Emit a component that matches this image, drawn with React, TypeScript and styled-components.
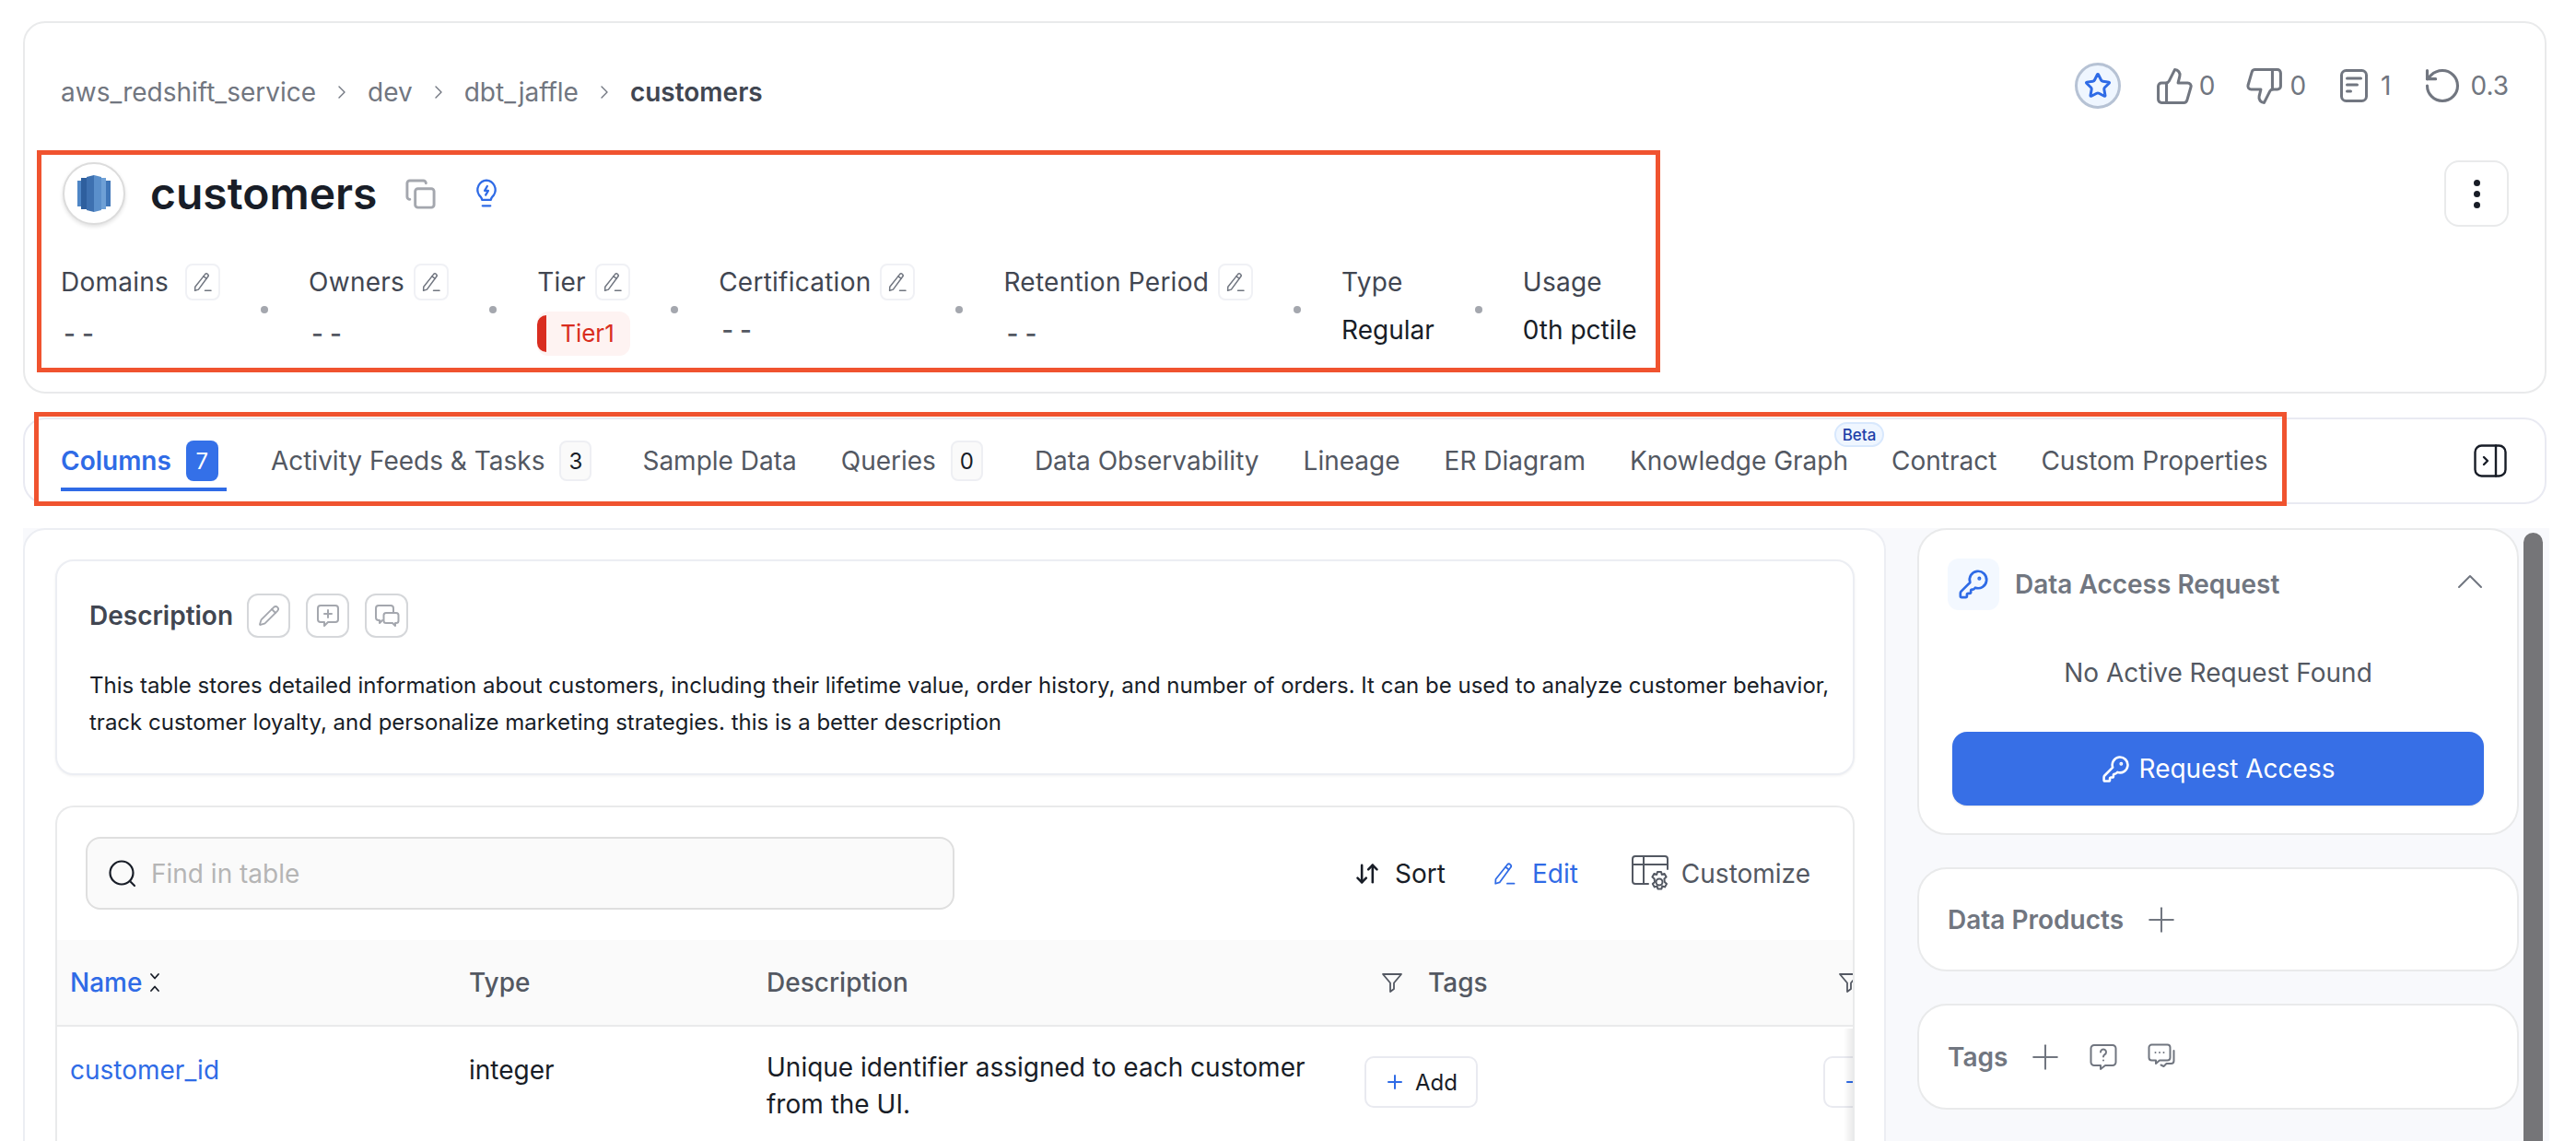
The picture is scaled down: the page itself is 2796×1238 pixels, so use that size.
import { Fragment } from "react";
import styled, { createGlobalStyle } from "styled-components";
import {
  ArrowDownUp,
  ChevronRight,
  ChevronUp,
  Copy,
  KeyRound,
  Pencil,
  Plus,
  RotateCcw,
  Star,
  ThumbsDown,
  ThumbsUp,
} from "lucide-react";

const GlobalStyle = createGlobalStyle`
  html, body {
    margin: 0;
    padding: 0;
    width: 2796px;
    height: 1238px;
    overflow: hidden;
    background: #fff;
  }
  * {
    box-sizing: border-box;
  }
  body {
    font-family: Inter, "Noto Sans", sans-serif;
    font-size: 28px;
    color: #181d27;
  }
`;

const Page = styled.div`
  position: relative;
  width: 2796px;
  height: 1238px;
  padding: 23px 32px 0 25px;
  overflow: hidden;
`;

const HeaderMark = styled.div`
  position: absolute;
  left: 40px;
  top: 163px;
  width: 1762px;
  height: 241px;
  border: 5px solid #f0532f;
  pointer-events: none;
`;

const TabsMark = styled.div`
  position: absolute;
  left: 37px;
  top: 447px;
  width: 2445px;
  height: 102px;
  border: 5px solid #f0532f;
  pointer-events: none;
`;

const HeaderCard = styled.section`
  border: 2px solid #e9eaeb;
  border-radius: 24px;
  padding: 43px 39px 39px;
  background: #fff;
`;

const TopRow = styled.div`
  display: flex;
  justify-content: space-between;
  height: 50px;
`;

const Breadcrumb = styled.nav`
  display: flex;
  align-items: center;
  height: 40px;
  margin-top: 12px;
  color: #717680;
  line-height: 40px;
`;

const Crumb = styled.span<{ $current?: boolean }>`
  font-weight: ${({ $current }) => ($current ? 600 : 400)};
  color: ${({ $current }) => ($current ? "#414651" : "#717680")};
`;

const CrumbSeparator = styled(ChevronRight)`
  width: 24px;
  height: 24px;
  margin: 0 16px;
  color: #717680;
  stroke-width: 1.4;
`;

const Stats = styled.div`
  display: flex;
  align-items: center;
  color: #717680;
  font-weight: 400;
`;

const StarCircle = styled.div`
  display: flex;
  align-items: center;
  justify-content: center;
  width: 50px;
  height: 50px;
  margin-right: 37px;
  border: 3px solid #b6c2d4;
  border-radius: 50%;
  background: #eff6ff;
  color: #2f6be6;
`;

const Stat = styled.div<{ $gap: number; $trail: number }>`
  display: flex;
  align-items: center;
  gap: ${({ $gap }) => $gap}px;
  margin-right: ${({ $trail }) => $trail}px;
  line-height: 36px;
`;

const TitleRow = styled.div`
  display: flex;
  align-items: center;
  height: 72px;
  margin-top: 56px;
`;

const LogoCircle = styled.div`
  display: flex;
  align-items: center;
  justify-content: center;
  width: 68px;
  height: 68px;
  margin: 0 27px 0 2px;
  border: 2px solid #dcdcdc;
  border-radius: 50%;
  background: #fff;
  box-shadow: 0 2px 4px rgba(0, 0, 0, 0.12);
`;

const Title = styled.h1`
  margin: 0;
  font-size: 48px;
  font-weight: 600;
  line-height: 60px;
  color: #181d27;
`;

const CopyIcon = styled(Copy)`
  width: 35px;
  height: 35px;
  margin-left: 30px;
  color: #a4a7ae;
`;

const BulbWrap = styled.span`
  display: flex;
  margin-left: 41px;
  color: #2f6be6;
`;

const KebabButton = styled.button`
  display: flex;
  flex-direction: column;
  align-items: center;
  justify-content: center;
  gap: 5px;
  width: 70px;
  height: 72px;
  margin-left: auto;
  padding: 0;
  border: 2px solid #e9eaeb;
  border-radius: 16px;
  background: #fff;
`;

const KebabDot = styled.span`
  width: 7px;
  height: 7px;
  border-radius: 50%;
  background: #181d27;
`;

const MetaRow = styled.div`
  display: flex;
  align-items: center;
  gap: 44px;
  height: 100px;
  margin-top: 40px;
`;

const MetaItem = styled.div`
  display: flex;
  flex-direction: column;
  gap: 12px;
  height: 100px;
`;

const MetaLabel = styled.div<{ $gap?: number }>`
  display: flex;
  align-items: center;
  gap: ${({ $gap }) => $gap ?? 10}px;
  height: 40px;
  color: #414651;
  letter-spacing: 0.25px;
  white-space: nowrap;
`;

const MetaValue = styled.div<{ $low?: boolean }>`
  height: 48px;
  line-height: ${({ $low }) => ($low ? "48px" : "40px")};
  font-weight: 420;
  color: #181d27;
  white-space: nowrap;
`;

const Dashes = styled.span`
  padding-left: 3px;
  font-weight: 500;
  letter-spacing: 7px;
  color: #535862;
`;

const EditButton = styled.button`
  display: flex;
  align-items: center;
  justify-content: center;
  width: 38px;
  height: 40px;
  padding: 0;
  border: 2px solid #f0f1f5;
  border-radius: 8px;
  background: #fff;
  color: #717680;
`;

const MetaDot = styled.span`
  flex: none;
  width: 8px;
  height: 8px;
  border-radius: 50%;
  background: #a4a7ae;
`;

const TierTag = styled.span`
  display: inline-flex;
  align-items: center;
  height: 48px;
  width: 101px;
  padding-left: 25px;
  border-radius: 12px;
  overflow: hidden;
  position: relative;
  background: #fef3f2;
  color: #d92d20;
  font-size: 26px;
  font-weight: 400;

  &::before {
    content: "";
    position: absolute;
    left: 0;
    top: 4px;
    bottom: 4px;
    width: 10px;
    border-radius: 10px 0 0 10px;
    background: #d92d20;
  }
`;

const TabsCard = styled.section`
  display: flex;
  align-items: center;
  gap: 48px;
  height: 94px;
  margin-top: 26px;
  padding: 0 41px 0 39px;
  border: 2px solid #e9eaf2;
  border-radius: 24px;
  background: #fff;
`;

const Tab = styled.div<{ $active?: boolean; $trail?: number; $pull?: number }>`
  position: relative;
  display: flex;
  align-items: center;
  gap: 16px;
  height: 44px;
  padding-right: ${({ $trail }) => $trail ?? 0}px;
  margin-left: ${({ $pull }) => -($pull ?? 0)}px;
  color: ${({ $active }) => ($active ? "#2f6be6" : "#535862")};
  font-weight: ${({ $active }) => ($active ? 600 : 400)};
  white-space: nowrap;

  ${({ $active }) =>
    $active &&
    `&::after {
      content: "";
      position: absolute;
      left: 0;
      right: 0;
      bottom: -11px;
      height: 4px;
      background: #2f6be6;
    }`}
`;

const Count = styled.span<{ $active?: boolean }>`
  display: flex;
  align-items: center;
  justify-content: center;
  width: 35px;
  height: 44px;
  border: ${({ $active }) => ($active ? "none" : "2px solid #eeeff3")};
  border-radius: 8px;
  background: ${({ $active }) => ($active ? "#3470e8" : "#fafafa")};
  color: ${({ $active }) => ($active ? "#fff" : "#181d27")};
  font-size: 24px;
  font-weight: 400;
`;

const BetaBadge = styled.span`
  position: absolute;
  right: -39px;
  top: -20px;
  display: flex;
  align-items: center;
  justify-content: center;
  width: 54px;
  height: 27px;
  border: 2px solid #d8e8fd;
  border-radius: 14px;
  background: #eff6ff;
  color: #1d3fa8;
  font-size: 17px;
  font-weight: 500;
`;

const CollapseWrap = styled.span`
  display: flex;
  margin-left: auto;
  color: #181d27;
`;

const Content = styled.div`
  display: flex;
  width: 2742px;
  height: 665px;
  margin-top: 26px;
  background: #f8f9fc;
  overflow: hidden;
`;

const MainCard = styled.main`
  flex: none;
  width: 2022px;
  height: 720px;
  padding: 32px 32px 0 33px;
  border: 2px solid #eceef3;
  border-radius: 24px 24px 0 0;
  background: #fff;
`;

const DescriptionCard = styled.section`
  padding: 35px 6px 35px 35px;
  border: 2px solid #eceef3;
  border-radius: 20px;
  background: #fff;
  box-shadow: 0 1px 3px rgba(10, 13, 18, 0.06);
`;

const DescriptionHead = styled.div`
  display: flex;
  align-items: center;
  gap: 17px;
  height: 48px;
`;

const DescriptionTitle = styled.h2`
  margin: 0 -2px 0 0;
  font-size: 28px;
  font-weight: 600;
  color: #414651;
`;

const IconButton = styled.button`
  display: flex;
  align-items: center;
  justify-content: center;
  width: 47px;
  height: 48px;
  padding: 0;
  border: 2px solid #d5d7da;
  border-radius: 12px;
  background: #fff;
  color: #a4a7ae;
`;

const DescriptionText = styled.p`
  margin: 32px 0 0;
  font-size: 24px;
  line-height: 40px;
  color: #181d27;
`;

const TableCard = styled.section`
  position: relative;
  margin-top: 33px;
  height: 400px;
  border: 2px solid #e9eaeb;
  border-bottom: none;
  border-radius: 20px 20px 0 0;
  background: #fff;
  overflow: hidden;
`;

const TableToolbar = styled.div`
  display: flex;
  align-items: center;
  justify-content: space-between;
  padding: 32px 46px 33px 31px;
`;

const SearchBox = styled.div`
  display: flex;
  align-items: center;
  gap: 15px;
  width: 943px;
  height: 79px;
  padding: 0 22px;
  border: 2px solid #dfdfdf;
  border-radius: 16px;
  background: #fafafa;
  color: #181d27;
`;

const Placeholder = styled.span`
  color: #b5b5b5;
`;

const ToolbarActions = styled.div`
  display: flex;
  align-items: center;
`;

const ToolbarAction = styled.div<{ $color: string; $gap: number; $trail: number }>`
  display: flex;
  align-items: center;
  gap: ${({ $gap }) => $gap}px;
  margin-right: ${({ $trail }) => $trail}px;
  color: ${({ $color }) => $color};
  font-weight: 420;
`;

const TableHead = styled.div`
  display: grid;
  grid-template-columns: 447px 323px 649px 498px 200px;
  align-items: center;
  height: 94px;
  border-bottom: 2px solid #e9eaeb;
  background: #fafafa;
  color: #535862;
  font-weight: 500;
`;

const HeadCell = styled.div<{ $active?: boolean; $pad?: number; $gap?: number }>`
  display: flex;
  align-items: center;
  gap: ${({ $gap }) => $gap ?? 8}px;
  padding-left: ${({ $pad }) => $pad ?? 0}px;
  color: ${({ $active }) => ($active ? "#2f6be6" : "#535862")};
`;

const TableRow = styled.div`
  display: grid;
  grid-template-columns: 447px 323px 649px 498px 200px;
  align-items: start;
`;

const NameCell = styled.div`
  padding: 27px 0 0 14px;
  line-height: 40px;
  color: #2f6be6;
`;

const TypeCell = styled.div`
  padding-top: 27px;
  line-height: 40px;
`;

const DescCell = styled.div`
  padding: 24px 49px 0 0;
  line-height: 40px;
  font-weight: 400;
`;

const AddCell = styled.div`
  padding-top: 32px;
`;

const AddButton = styled.button`
  display: flex;
  align-items: center;
  justify-content: flex-start;
  gap: 10px;
  width: 123px;
  height: 56px;
  padding: 0 0 0 19px;
  border: 2px solid #e9eaf0;
  border-radius: 10px;
  background: #fff;
  font-family: inherit;
  font-size: 24px;
  font-weight: 420;
  color: #181d27;
`;

const FixedShadow = styled.div`
  position: absolute;
  right: 0;
  top: 240px;
  bottom: 0;
  width: 10px;
  background: linear-gradient(to right, rgba(0, 0, 0, 0), rgba(0, 0, 0, 0.08));
`;

const SidePanel = styled.aside`
  flex: none;
  display: flex;
  flex-direction: column;
  gap: 35px;
  width: 653px;
  margin-left: 34px;
`;

const SideCard = styled.section<{ $height?: number }>`
  display: flex;
  flex-direction: column;
  justify-content: center;
  height: ${({ $height }) => ($height ? `${$height}px` : "auto")};
  padding: 31px 31px 30px;
  border: 2px solid #e9eaeb;
  border-radius: 32px;
  background: #fff;
`;

const SideHead = styled.div`
  display: flex;
  align-items: center;
  height: 56px;
`;

const KeyTile = styled.span`
  display: flex;
  align-items: center;
  justify-content: center;
  width: 56px;
  height: 56px;
  margin-right: 17px;
  border-radius: 12px;
  background: #f3f8ff;
  color: #2f6be6;
`;

const SideTitle = styled.h3`
  margin: 0;
  font-size: 28px;
  font-weight: 600;
  line-height: 40px;
  color: #717680;
`;

const Collapse = styled(ChevronUp)`
  width: 48px;
  height: 48px;
  margin: -6px -4px 0 auto;
  color: #717680;
  stroke-width: 1;
`;

const EmptyText = styled.p`
  margin: 48px 0 0;
  line-height: 40px;
  text-align: center;
  color: #535862;
`;

const RequestButton = styled.button`
  display: flex;
  align-items: center;
  justify-content: center;
  gap: 10px;
  height: 80px;
  margin: 44px 5px 0;
  padding: 0;
  border: none;
  border-radius: 16px;
  background: #376fe6;
  box-shadow: 0 1px 2px rgba(10, 13, 18, 0.1);
  font-family: inherit;
  font-size: 28px;
  font-weight: 420;
  color: #fff;
`;

const SideLine = styled.div`
  display: flex;
  align-items: center;
  gap: 19px;
  color: #717680;
`;

const SidePlus = styled(Plus)`
  width: 44px;
  height: 44px;
  stroke-width: 1.1;
  color: #717680;
`;

const SideIcon = styled.span<{ $lead: number }>`
  display: flex;
  margin-left: ${({ $lead }) => $lead}px;
`;

const Scrollbar = styled.div`
  flex: none;
  width: 21px;
  height: 720px;
  margin: 5px 7px 0 5px;
  border-radius: 11px;
  background: #757578;
`;

const PencilLine = ({ size = 24 }: { size?: number }) => (
  <svg width={size} height={size} viewBox="0 0 24 24" fill="none" stroke="currentColor" strokeWidth={1.5} strokeLinecap="round" strokeLinejoin="round">
    <path d="M14.6 3.6a2 2 0 0 1 3 2.7L7.4 20.1 3.6 21.2 3.8 17.2z" />
    <path d="M13 5.8l3 2.3" />
    <path d="M14.5 21.2h6.5" />
  </svg>
);

const RedshiftLogo = () => (
  <svg width="36" height="40" viewBox="0 0 36 40">
    <rect x="0" y="6" width="4" height="28" fill="#4f86c6" />
    <rect x="4" y="3" width="6" height="34" fill="#2e5f9e" />
    <path d="M10 2l8-2v40l-8-2z" fill="#3d70b0" />
    <path d="M18 0l8 2v36l-8 2z" fill="#5a8fcb" />
    <rect x="26" y="3" width="5" height="34" fill="#6ea0d6" />
    <rect x="31" y="6" width="5" height="28" fill="#3f76b8" />
  </svg>
);

const BulbIcon = () => (
  <svg width="26" height="32" viewBox="0 0 24 30" fill="none" stroke="currentColor" strokeWidth={2.1} strokeLinecap="round" strokeLinejoin="round">
    <path d="M7.500 21.500c0-2-1-3-3-5A9.800 9.800 0 0 1 12 1.500a9.800 9.800 0 0 1 7.500 15c-2 2-3 3-3 5z" />
    <path d="M12.800 7.500l-2.600 4.600h3.600L11.200 16.500" />
    <path d="M8 27.500h8" />
  </svg>
);

const DocIcon = () => (
  <svg width="30" height="36" viewBox="0 0 30 36" fill="none" stroke="currentColor" strokeWidth={3} strokeLinecap="round" strokeLinejoin="round">
    <rect x="1.500" y="1.500" width="27" height="33" rx="5" />
    <path d="M7.500 10h15M7.500 17h11M7.500 24h4" />
  </svg>
);

const CollapseIcon = () => (
  <svg width="36" height="36" viewBox="0 0 36 36" fill="none" stroke="currentColor" strokeWidth={2.4} strokeLinecap="round" strokeLinejoin="round">
    <rect x="1.500" y="1.500" width="33" height="33" rx="7" />
    <path d="M24 1.500v33" />
    <path d="M11 14l4 4-4 4" />
  </svg>
);

const SearchIcon = () => (
  <svg width="32" height="32" viewBox="0 0 32 32" fill="none" stroke="#181d27" strokeWidth={2.2} strokeLinecap="round">
    <circle cx="15" cy="15" r="12.500" />
    <path d="M25 25l4 4" />
  </svg>
);

const TableGear = () => (
  <svg width="42" height="40" viewBox="0 0 42 40" fill="none" stroke="#535862" strokeWidth={2} strokeLinecap="round" strokeLinejoin="round">
    <path d="M18 31H4a3 3 0 0 1-3-3V4a3 3 0 0 1 3-3h32a3 3 0 0 1 3 3v11" />
    <path d="M1 10h38M13 1v30" />
    <circle cx="30" cy="29" r="3.500" />
    <path d="M28 18h4l.8 3 2.800-1 2 3.400-2.200 2 .4 3.600 2.200 2-2 3.400-2.800-1-.8 3h-4l-.8-3-2.800 1-2-3.400 2.200-2-.4-3.600-2.200-2 2-3.400 2.800 1z" />
  </svg>
);

const FilterIcon = () => (
  <svg width="24" height="24" viewBox="0 0 24 24" fill="none" stroke="#535862" strokeWidth={1.8} strokeLinejoin="round">
    <path d="M2 3h20l-8 9.500V19l-4 3v-9.500z" />
  </svg>
);

const SortMark = () => (
  <svg width="12" height="22" viewBox="0 0 12 22" fill="none" stroke="#181d27" strokeWidth={1.8} strokeLinecap="round" strokeLinejoin="round">
    <path d="M2 2l4 4.500L10 2M2 20l4-4.500 4 4.500" />
  </svg>
);

const CommentPlus = () => (
  <svg width="26" height="26" viewBox="0 0 26 26" fill="none" stroke="currentColor" strokeWidth={2} strokeLinecap="round" strokeLinejoin="round">
    <path d="M5 2h16a3 3 0 0 1 3 3v12a3 3 0 0 1-3 3H13l-4 4v-4H5a3 3 0 0 1-3-3V5a3 3 0 0 1 3-3z" />
    <path d="M13 7v8M9 11h8" />
  </svg>
);

const CommentPair = () => (
  <svg width="28" height="28" viewBox="0 0 28 28" fill="none" stroke="currentColor" strokeWidth={2} strokeLinecap="round" strokeLinejoin="round">
    <path d="M18 3H5a3 3 0 0 0-3 3v10a3 3 0 0 0 3 3h1v3l3-3" />
    <path d="M18 3a3 3 0 0 1 3 3v4" />
    <path d="M13 11h11a2.500 2.500 0 0 1 2.500 2.500v6A2.500 2.500 0 0 1 24 22h-1v3l-3-3h-7a2.500 2.500 0 0 1-2.500-2.500v-6A2.500 2.500 0 0 1 13 11z" />
  </svg>
);

const CommentQuestion = () => (
  <svg width="30" height="30" viewBox="0 0 30 30" fill="none" stroke="#717680" strokeWidth={2} strokeLinecap="round" strokeLinejoin="round">
    <path d="M5 2h20a3.500 3.500 0 0 1 3.500 3.500v15a3.500 3.500 0 0 1-3.500 3.500h-8l-5 4v-4H5a3.500 3.500 0 0 1-3.500-3.500v-15A3.500 3.500 0 0 1 5 2z" />
    <path d="M12 9.500a3 3 0 1 1 4.500 2.600c-1 .6-1.500 1.200-1.500 2.400" />
    <path d="M15 18.500v.1" />
  </svg>
);

const CommentDots = () => (
  <svg width="30" height="30" viewBox="0 0 30 30" fill="none" stroke="#717680" strokeWidth={2} strokeLinecap="round" strokeLinejoin="round">
    <path d="M4.500 1.500h17a3 3 0 0 1 3 3v11a3 3 0 0 1-3 3H13l-4 3.500v-3.500H4.500a3 3 0 0 1-3-3v-11a3 3 0 0 1 3-3z" />
    <path d="M8.500 10v.1M13 10v.1M17.500 10v.1" />
    <path d="M28.500 8v11a3 3 0 0 1-3 3h-5l-3 3-3-1.500" />
  </svg>
);

const metaFields = [
  { label: "Domains", labelGap: 18, editable: true, dashes: true, low: true },
  { label: "Owners", editable: true, dashes: true, low: true },
  { label: "Tier", editable: true, tag: "Tier1" },
  { label: "Certification", editable: true, dashes: true },
  { label: "Retention Period", editable: true, dashes: true, low: true },
  { label: "Type", value: "Regular" },
  { label: "Usage", value: "0th pctile" },
];

const tabs = [
  { name: "Columns", count: "7", active: true, trail: 9 },
  { name: "Activity Feeds & Tasks", count: "3", trail: 7 },
  { name: "Sample Data" },
  { name: "Queries", count: "0", trail: 8 },
  { name: "Data Observability" },
  { name: "Lineage" },
  { name: "ER Diagram" },
  { name: "Knowledge Graph", beta: true },
  { name: "Contract", pull: 1 },
  { name: "Custom Properties" },
];

export default function App() {
  return (
    <Page>
      <GlobalStyle />
      <HeaderCard>
        <TopRow>
          <Breadcrumb>
            <Crumb>aws_redshift_service</Crumb>
            <CrumbSeparator />
            <Crumb>dev</Crumb>
            <CrumbSeparator />
            <Crumb>dbt_jaffle</Crumb>
            <CrumbSeparator />
            <Crumb $current>customers</Crumb>
          </Breadcrumb>
          <Stats>
            <StarCircle>
              <Star size={30} strokeWidth={2.4} />
            </StarCircle>
            <Stat $gap={5} $trail={32}>
              <ThumbsUp size={43} strokeWidth={1.7} />0
            </Stat>
            <Stat $gap={6} $trail={37}>
              <ThumbsDown size={43} strokeWidth={1.7} />0
            </Stat>
            <Stat $gap={14} $trail={34}>
              <DocIcon />1
            </Stat>
            <Stat $gap={8} $trail={0}>
              <RotateCcw size={44} strokeWidth={1.7} />0.3
            </Stat>
          </Stats>
        </TopRow>

        <TitleRow>
          <LogoCircle>
            <RedshiftLogo />
          </LogoCircle>
          <Title>customers</Title>
          <CopyIcon />
          <BulbWrap>
            <BulbIcon />
          </BulbWrap>
          <KebabButton>
            <KebabDot />
            <KebabDot />
            <KebabDot />
          </KebabButton>
        </TitleRow>

        <MetaRow>
          {metaFields.map((field, i) => (
            <Fragment key={field.label}>
              {i > 0 && <MetaDot />}
              <MetaItem>
                <MetaLabel $gap={field.labelGap}>
                  {field.label}
                  {field.editable && (
                    <EditButton>
                      <PencilLine />
                    </EditButton>
                  )}
                </MetaLabel>
                <MetaValue $low={field.low}>
                  {field.dashes && <Dashes>--</Dashes>}
                  {field.tag && <TierTag>{field.tag}</TierTag>}
                  {field.value}
                </MetaValue>
              </MetaItem>
            </Fragment>
          ))}
        </MetaRow>
      </HeaderCard>

      <TabsCard>
        {tabs.map((tab) => (
          <Tab key={tab.name} $active={tab.active} $trail={tab.trail} $pull={tab.pull}>
            {tab.name}
            {tab.count && <Count $active={tab.active}>{tab.count}</Count>}
            {tab.beta && <BetaBadge>Beta</BetaBadge>}
          </Tab>
        ))}
        <CollapseWrap>
          <CollapseIcon />
        </CollapseWrap>
      </TabsCard>

      <Content>
        <MainCard>
          <DescriptionCard>
            <DescriptionHead>
              <DescriptionTitle>Description</DescriptionTitle>
              <IconButton>
                <Pencil size={24} strokeWidth={1.8} />
              </IconButton>
              <IconButton>
                <CommentPlus />
              </IconButton>
              <IconButton>
                <CommentPair />
              </IconButton>
            </DescriptionHead>
            <DescriptionText>
              This table stores detailed information about customers, including their lifetime value, order history, and number of orders. It can be used to analyze customer behavior, track customer loyalty, and personalize marketing strategies. this is a better description
            </DescriptionText>
          </DescriptionCard>

          <TableCard>
            <TableToolbar>
              <SearchBox>
                <SearchIcon />
                <Placeholder>Find in table</Placeholder>
              </SearchBox>
              <ToolbarActions>
                <ToolbarAction $color="#181d27" $gap={16} $trail={50}>
                  <ArrowDownUp size={28} strokeWidth={2.2} />
                  Sort
                </ToolbarAction>
                <ToolbarAction $color="#2f6be6" $gap={16} $trail={58}>
                  <PencilLine size={28} />
                  Edit
                </ToolbarAction>
                <ToolbarAction $color="#535862" $gap={12} $trail={0}>
                  <TableGear />
                  Customize
                </ToolbarAction>
              </ToolbarActions>
            </TableToolbar>
            <TableHead>
              <HeadCell $active $pad={14}>
                Name
                <SortMark />
              </HeadCell>
              <HeadCell>Type</HeadCell>
              <HeadCell>Description</HeadCell>
              <HeadCell $pad={18} $gap={27}>
                <FilterIcon />
                Tags
              </HeadCell>
              <HeadCell $pad={16}>
                <FilterIcon />
              </HeadCell>
            </TableHead>
            <TableRow>
              <NameCell>customer_id</NameCell>
              <TypeCell>integer</TypeCell>
              <DescCell>Unique identifier assigned to each customer from the UI.</DescCell>
              <AddCell>
                <AddButton>
                  <Plus size={24} color="#2f6be6" strokeWidth={2} />
                  Add
                </AddButton>
              </AddCell>
              <AddCell>
                <AddButton>
                  <Plus size={24} color="#2f6be6" strokeWidth={2} />
                </AddButton>
              </AddCell>
            </TableRow>
            <FixedShadow />
          </TableCard>
        </MainCard>

        <SidePanel>
          <SideCard>
            <SideHead>
              <KeyTile>
                <KeyRound size={34} strokeWidth={1.9} />
              </KeyTile>
              <SideTitle>Data Access Request</SideTitle>
              <Collapse />
            </SideHead>
            <EmptyText>No Active Request Found</EmptyText>
            <RequestButton>
              <KeyRound size={31} strokeWidth={2} />
              Request Access
            </RequestButton>
          </SideCard>
          <SideCard $height={113}>
            <SideLine>
              <SideTitle>Data Products</SideTitle>
              <SidePlus />
            </SideLine>
          </SideCard>
          <SideCard $height={115}>
            <SideLine>
              <SideTitle>Tags</SideTitle>
              <SidePlus />
              <SideIcon $lead={7}>
                <CommentQuestion />
              </SideIcon>
              <SideIcon $lead={14}>
                <CommentDots />
              </SideIcon>
            </SideLine>
          </SideCard>
        </SidePanel>
        <Scrollbar />
      </Content>

      <HeaderMark />
      <TabsMark />
    </Page>
  );
}
